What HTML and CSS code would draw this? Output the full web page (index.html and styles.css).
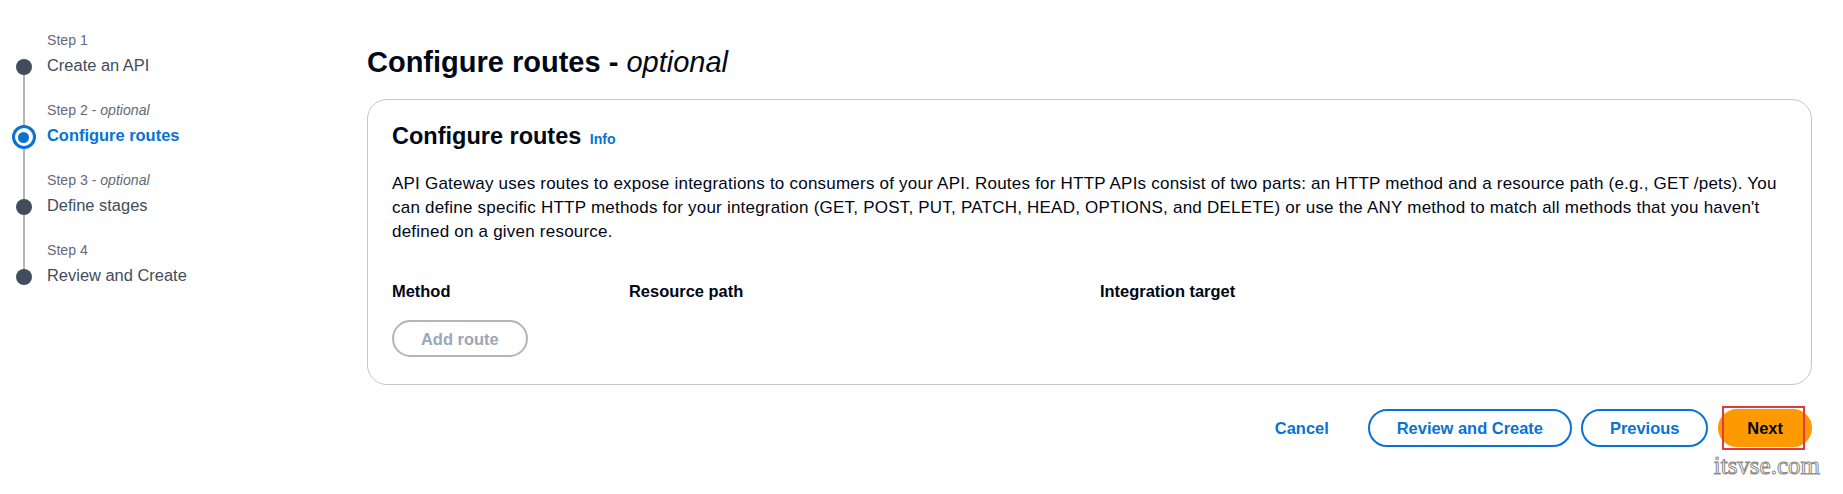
FILE: index.html
```html
<!DOCTYPE html>
<html lang="en">
<head>
<meta charset="utf-8">
<title>Configure routes</title>
<link rel="stylesheet" href="styles.css">
</head>
<body>
<div class="page">
  <nav class="steps">
    <div class="step step-first">
      <div class="rail"><span class="dot"></span></div>
      <div class="step-text">
        <div class="step-label">Step 1</div>
        <div class="step-title">Create an API</div>
      </div>
    </div>
    <div class="step">
      <div class="rail"><span class="ring"><span class="ring-in"></span></span></div>
      <div class="step-text">
        <div class="step-label">Step 2 - <i>optional</i></div>
        <div class="step-title active">Configure routes</div>
      </div>
    </div>
    <div class="step">
      <div class="rail"><span class="dot"></span></div>
      <div class="step-text">
        <div class="step-label">Step 3 - <i>optional</i></div>
        <div class="step-title">Define stages</div>
      </div>
    </div>
    <div class="step step-last">
      <div class="rail"><span class="dot"></span></div>
      <div class="step-text">
        <div class="step-label">Step 4</div>
        <div class="step-title">Review and Create</div>
      </div>
    </div>
  </nav>

  <main class="main">
    <h1 class="page-title">Configure routes - <i>optional</i></h1>
    <section class="card">
      <h2 class="card-title">Configure routes <a class="info">Info</a></h2>
      <p class="desc">API Gateway uses routes to expose integrations to consumers of your API. Routes for HTTP APIs consist of two parts: an HTTP method and a resource path (e.g., GET /pets). You can define specific HTTP methods for your integration (GET, POST, PUT, PATCH, HEAD, OPTIONS, and DELETE) or use the ANY method to match all methods that you haven't defined on a given resource.</p>
      <div class="cols">
        <div>Method</div>
        <div>Resource path</div>
        <div>Integration target</div>
      </div>
      <button class="btn btn-disabled" type="button">Add route</button>
    </section>
    <div class="actions">
      <button class="btn btn-link" type="button">Cancel</button>
      <button class="btn btn-normal" type="button">Review and Create</button>
      <button class="btn btn-normal" type="button">Previous</button>
      <button class="btn btn-primary" type="button">Next<span class="mark"></span></button>
    </div>
    <div class="watermark">itsvse.com</div>
  </main>
</div>
</body>
</html>
```

FILE: styles.css
```css
* { box-sizing: border-box; }

html, body {
  margin: 0;
  padding: 0;
  background: #ffffff;
}

body {
  font-family: "Liberation Sans", Arial, sans-serif;
  color: #000716;
  font-size: 16.45px;
  line-height: 24px;
}

.page {
  display: flex;
  align-items: flex-start;
}

/* ---------- steps ---------- */
.steps {
  width: 367px;
  flex: none;
  padding-top: 31px;
}

.step {
  display: flex;
  height: 70px;
}

.rail {
  width: 47px;
  flex: none;
  display: flex;
  flex-direction: column;
  align-items: center;
  padding-top: 24px;
  background: linear-gradient(#b4b4bb, #b4b4bb) center top / 2px 100% no-repeat;
}

.step-first .rail { background-position: center 36px; }
.step-last .rail { background-size: 2px 36px; }

.dot {
  margin-top: 4px;
  width: 16px;
  height: 16px;
  border-radius: 50%;
  background: #414d5c;
}

.ring {
  width: 24px;
  height: 24px;
  border-radius: 50%;
  border: 3px solid #0972d3;
  background: #ffffff;
  display: flex;
  align-items: center;
  justify-content: center;
}

.ring-in {
  width: 11px;
  height: 11px;
  border-radius: 50%;
  background: #0972d3;
}

.step-label {
  font-size: 14.1px;
  line-height: 19px;
  color: #5f6b7a;
  margin-bottom: 3px;
}

.step-title {
  font-size: 16.45px;
  line-height: 24px;
  color: #414d5c;
}

.step-title.active {
  color: #0972d3;
  font-weight: 700;
}

/* ---------- main ---------- */
.main {
  flex: 1;
  padding: 44px 31px 0 0;
}

.page-title {
  margin: 0 0 19px;
  font-size: 29px;
  line-height: 36px;
  font-weight: 700;
  color: #000716;
}

.page-title i { font-weight: 400; }

.card {
  border: 1px solid #c6c6cd;
  border-radius: 20px;
  padding: 21px 24px 27px;
}

.card-title {
  margin: 0 0 18px;
  font-size: 23.5px;
  line-height: 30px;
  font-weight: 700;
}

.info {
  font-size: 14.1px;
  font-weight: 700;
  color: #0972d3;
  margin-left: 2px;
}

.desc {
  margin: 0 0 35px;
  font-size: 17px;
  letter-spacing: 0.22px;
}

.cols {
  display: grid;
  grid-template-columns: 237px 471px 1fr;
  font-weight: 700;
  margin-bottom: 17px;
}

.btn {
  font-family: inherit;
  font-size: 16.45px;
  font-weight: 700;
  line-height: 20px;
  height: 38px;
  padding: 0 27px;
  border-radius: 20px;
  border: 2px solid transparent;
  background: #ffffff;
  cursor: pointer;
}

.btn-disabled {
  height: 37px;
  border-color: #b4b4bb;
  color: #9ba7b6;
}

.actions {
  display: flex;
  justify-content: flex-end;
  align-items: center;
  gap: 9px;
  margin-top: 24px;
}

.btn-link {
  color: #0972d3;
  padding: 0 28px;
}

.btn-normal {
  border-color: #0972d3;
  color: #0972d3;
}

.btn-primary {
  position: relative;
  background: #ff9900;
  border-color: #ff9900;
  color: #000716;
  margin-left: 1px;
}

.mark {
  position: absolute;
  left: 2px;
  top: -5px;
  width: 83px;
  height: 44px;
  border: 2px solid #e0393e;
}

.watermark {
  text-align: right;
  margin-top: 4px;
  margin-right: -8px;
  font-family: "Liberation Serif", "Times New Roman", serif;
  font-size: 25px;
  line-height: 30px;
  color: transparent;
  -webkit-text-stroke: 1px #8a8a8a;
}
```
